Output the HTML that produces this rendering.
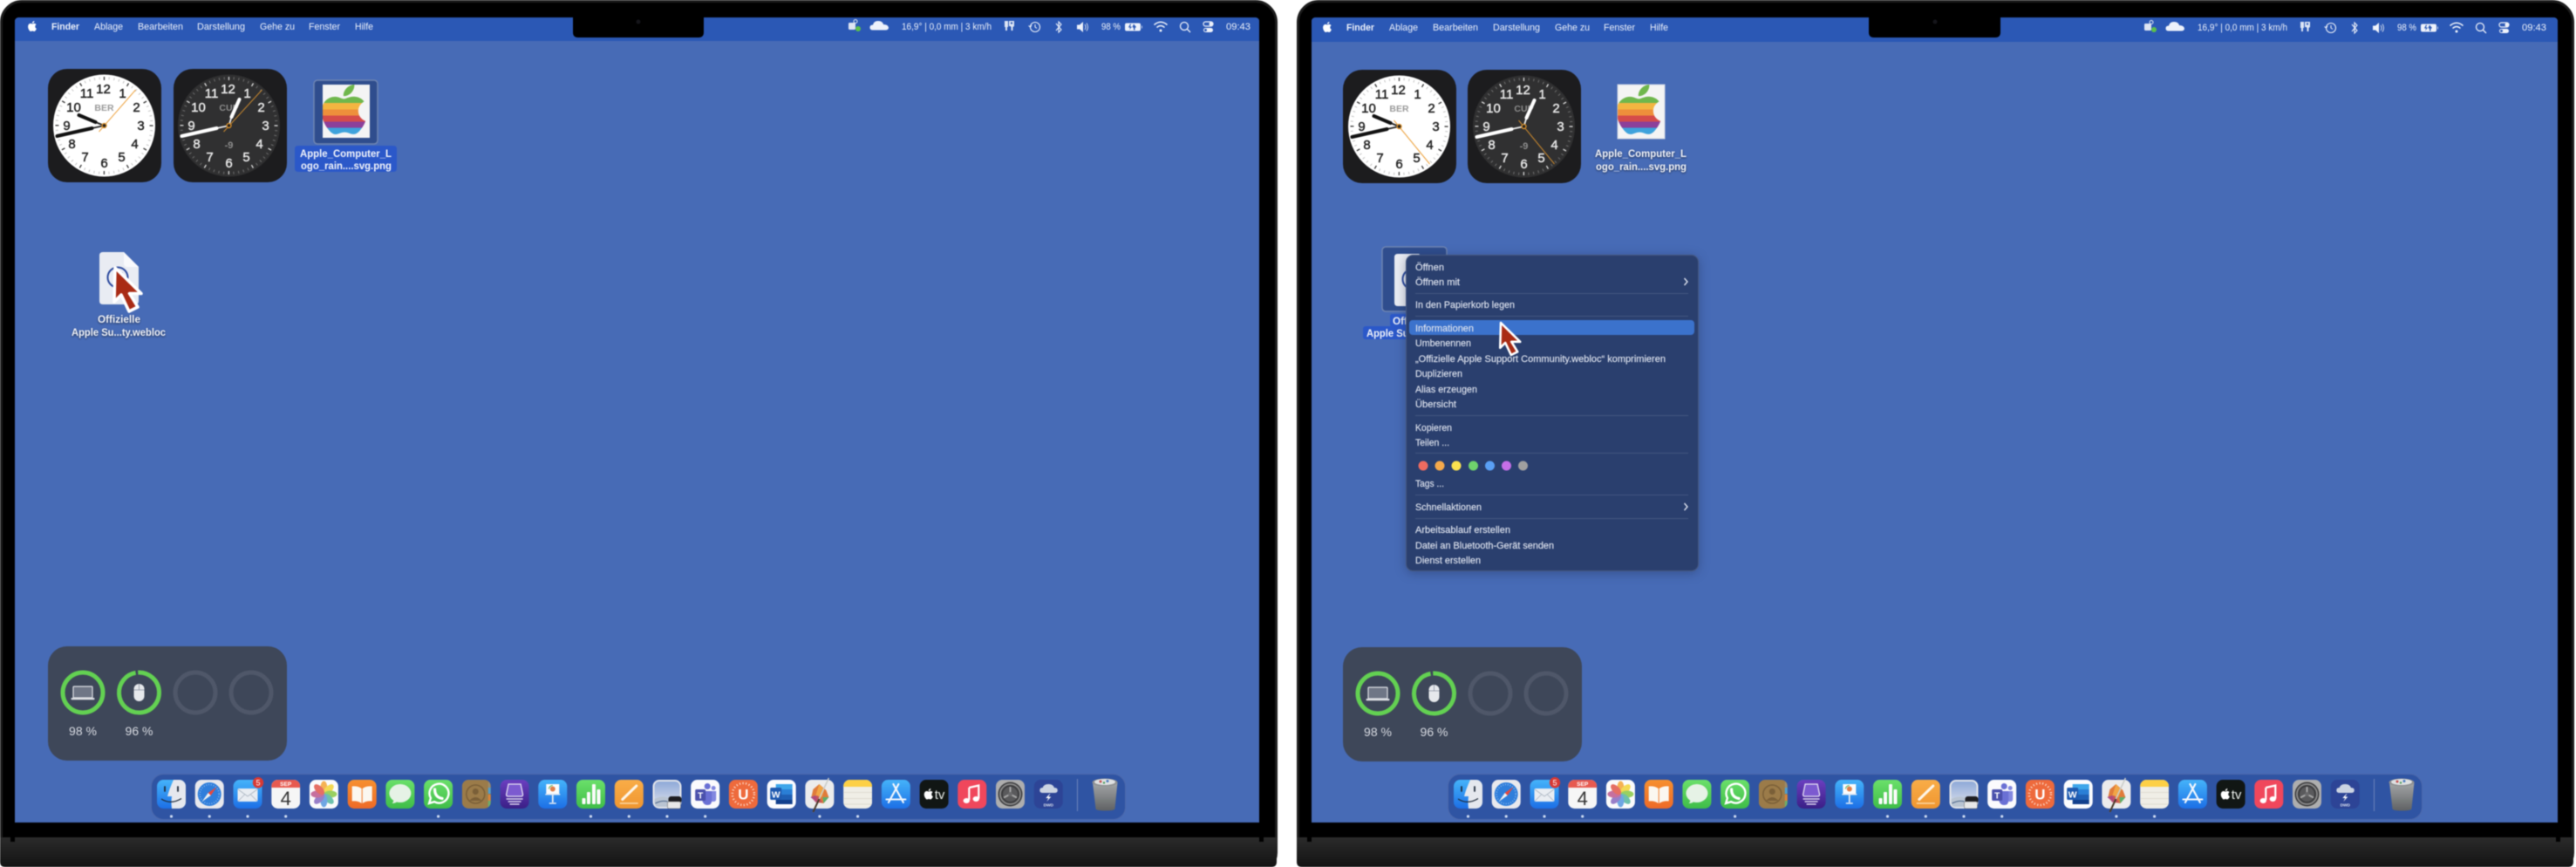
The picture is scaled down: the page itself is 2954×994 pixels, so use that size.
<!DOCTYPE html>
<html><head><meta charset="utf-8"><title>Finder</title>
<style>
html,body{margin:0;padding:0;background:#fff;width:2954px;height:994px;overflow:hidden}
svg{display:block;filter:blur(.6px)}
text{font-family:"Liberation Sans",sans-serif}
.mb{font-size:11px;fill:#eef2fb}
.lb{font-size:11.5px;font-weight:bold;fill:#f2f4fa}
.sh{filter:drop-shadow(0 1px 1px rgba(0,0,0,.55))}
.mi{font-size:11.2px;fill:#dde2ee;stroke:#dde2ee;stroke-width:.15}
.n{font-size:15px;text-anchor:middle;stroke-width:.45}
.w{font-size:14px;fill:#d8dbe2;text-anchor:middle}
</style></head><body>
<svg xmlns="http://www.w3.org/2000/svg" width="2954" height="994" viewBox="0 0 2954 994">
<defs>
<linearGradient id="base" x1="0" y1="0" x2="0" y2="1"><stop offset="0" stop-color="#2b2b2b"/><stop offset="1" stop-color="#131313"/></linearGradient>
<linearGradient id="gb" x1="0" y1="0" x2="0" y2="1"><stop offset="0" stop-color="#45b4fa"/><stop offset="1" stop-color="#1c6fe6"/></linearGradient>
<linearGradient id="gg" x1="0" y1="0" x2="0" y2="1"><stop offset="0" stop-color="#6be06a"/><stop offset="1" stop-color="#3fbd48"/></linearGradient>
<linearGradient id="go" x1="0" y1="0" x2="0" y2="1"><stop offset="0" stop-color="#f9ad48"/><stop offset="1" stop-color="#f09630"/></linearGradient>
<linearGradient id="gor" x1="0" y1="0" x2="0" y2="1"><stop offset="0" stop-color="#f7902f"/><stop offset="1" stop-color="#ee6a28"/></linearGradient>
<linearGradient id="gp" x1="0" y1="0" x2="0" y2="1"><stop offset="0" stop-color="#6b3fc0"/><stop offset="1" stop-color="#3a1f86"/></linearGradient>
<linearGradient id="gt" x1="0" y1="0" x2="0" y2="1"><stop offset="0" stop-color="#a5a7a8"/><stop offset="1" stop-color="#5f6264"/></linearGradient>
<linearGradient id="gsky" x1="0" y1="0" x2="0" y2="1"><stop offset="0" stop-color="#8fa9d8"/><stop offset="1" stop-color="#dfe5ee"/></linearGradient>
<path id="ap" d="M12.152 6.896c-.948 0-2.415-1.078-3.96-1.04-2.04.027-3.91 1.183-4.961 3.014-2.117 3.675-.546 9.103 1.519 12.09 1.013 1.454 2.208 3.09 3.792 3.039 1.52-.065 2.09-.987 3.935-.987 1.831 0 2.35.987 3.96.948 1.637-.026 2.676-1.48 3.676-2.948 1.156-1.688 1.636-3.325 1.662-3.415-.039-.013-3.182-1.221-3.22-4.857-.026-3.04 2.48-4.494 2.597-4.559-1.429-2.09-3.623-2.324-4.39-2.376-2-.156-3.675 1.09-4.61 1.09zM15.53 3.83c.843-1.012 1.4-2.427 1.245-3.83-1.207.052-2.662.805-3.532 1.818-.78.896-1.454 2.338-1.273 3.714 1.338.104 2.715-.688 3.559-1.701"/>
<clipPath id="apc"><use href="#ap" transform="translate(-7 0) scale(2.58 2.375)"/></clipPath>
<clipPath id="r"><rect width="33" height="33" rx="7.5"/></clipPath>

<g id="rainbow"><g clip-path="url(#apc)">
<rect x="0" y="0" width="54" height="21" fill="#6fb74c"/><rect y="21" width="54" height="7.5" fill="#f3b541"/><rect y="28.5" width="54" height="7" fill="#ee8f3b"/><rect y="35.5" width="54" height="7" fill="#d54b4a"/><rect y="42.5" width="54" height="7" fill="#8c409a"/><rect y="49.5" width="54" height="8" fill="#3ea2dc"/>
</g></g>

<g id="ticksL"><circle r="54.5" fill="none" stroke="#c4c4c4" stroke-width="3" stroke-dasharray="1 4.707" transform="rotate(-90.5)"/><circle r="54" fill="none" stroke="#333" stroke-width="4" stroke-dasharray="1.3 26.97" transform="rotate(-90.7)"/></g>
<g id="ticksD"><circle r="54.5" fill="none" stroke="#6e6e6e" stroke-width="3" stroke-dasharray="1 4.707" transform="rotate(-90.5)"/><circle r="54" fill="none" stroke="#ddd" stroke-width="4" stroke-dasharray="1.3 26.97" transform="rotate(-90.7)"/></g>

<g id="lnums" fill="#222" stroke="#222">
<text class="n" x="-1" y="-37">12</text><text class="n" x="21" y="-32">1</text><text class="n" x="37" y="-16">2</text><text class="n" x="42" y="5">3</text><text class="n" x="35" y="26">4</text><text class="n" x="20" y="41">5</text><text class="n" x="0" y="48">6</text><text class="n" x="-22" y="41">7</text><text class="n" x="-37" y="26">8</text><text class="n" x="-43" y="5">9</text><text class="n" x="-35" y="-16">10</text><text class="n" x="-20" y="-32">11</text>
<text x="0" y="-17" text-anchor="middle" font-size="10.5" font-weight="bold" fill="#9a9a9a" stroke="none">BER</text>
</g>
<g id="dnums" fill="#e8e8e8" stroke="#e8e8e8">
<text class="n" x="-1" y="-37">12</text><text class="n" x="21" y="-32">1</text><text class="n" x="37" y="-16">2</text><text class="n" x="42" y="5">3</text><text class="n" x="35" y="26">4</text><text class="n" x="20" y="41">5</text><text class="n" x="0" y="48">6</text><text class="n" x="-22" y="41">7</text><text class="n" x="-37" y="26">8</text><text class="n" x="-43" y="5">9</text><text class="n" x="-35" y="-16">10</text><text class="n" x="-20" y="-32">11</text>
<text x="0" y="-17" text-anchor="middle" font-size="10.5" font-weight="bold" fill="#8d8d8d" stroke="none">CUP</text>
<text x="0" y="26" text-anchor="middle" font-size="11" font-weight="bold" fill="#8d8d8d" stroke="none">-9</text>
</g>

<g id="menuicons" fill="#eef2fb" stroke="none">
<!-- teams -->
<rect x="973" y="26" width="8" height="8" rx="1.2" fill="#dfe5f2"/><circle cx="981" cy="24.5" r="2" fill="none" stroke="#dfe5f2" stroke-width="1"/><circle cx="984" cy="33" r="3" fill="#5cc04a"/>
<!-- cloud -->
<path d="M1001 35q-3.500 0-3.500-3t3.500-3q1-4.500 6-4.500t6 4q5 0 6 3.500q0 3-4 3z" transform="translate(0 -.5)"/>
<!-- keys -->
<path d="M1152 24h4v7h-1v4h-2v-4h-1zM1157 24h6v6l-1.500 1v4h-2v-4l-1-1-1.500 0z" opacity=".92"/><circle cx="1160" cy="26.500" r="1.200" fill="#2b58b5"/>
<!-- time machine -->
<g fill="none" stroke="#eef2fb" stroke-width="1.100"><circle cx="1187" cy="31" r="5.500"/><path d="M1187 28v3l2 1.500M1179.500 29.500l2 1.500 1.500-2" stroke-width="1"/></g>
<!-- bt -->
<path d="M1211 27l6 7-3 3v-12l3 3-6 7" fill="none" stroke="#eef2fb" stroke-width="1.100"/>
<!-- sound -->
<path d="M1235 28.500h3l4-3.500v12l-4-3.500h-3z"/><path d="M1244 28q2 3 0 6M1246 26.500q3 4.500 0 9" fill="none" stroke="#dfe5f2" stroke-width=".9"/>
<!-- battery -->
<rect x="1290" y="26.500" width="18" height="9" rx="2" fill="#eef2fb"/><path d="M1296 27.500l-2 4h2l-1 3 3-4h-2l1-3z" fill="#2b58b5"/><path d="M1300 27.500l3 3.500-1.500 1v2.500h-1.500v-2.500l-1.500-1z" fill="#2b58b5"/><rect x="1309" y="29.500" width="1" height="3" opacity=".7"/>
<!-- wifi -->
<g fill="none" stroke="#eef2fb" stroke-width="1.500"><path d="M1323.500 28.500q7.500-6.500 15 0"/><path d="M1326.500 31.500q4.500-4 9 0"/></g><circle cx="1331" cy="35" r="1.500"/>
<!-- search -->
<g fill="none" stroke="#eef2fb" stroke-width="1.300"><circle cx="1358" cy="30" r="4.500"/><path d="M1361.500 33.500l3.500 3.500"/></g>
<!-- control center -->
<rect x="1380" y="25" width="11" height="5" rx="2.500" fill="none" stroke="#eef2fb" stroke-width="1.200"/><circle cx="1388.500" cy="27.500" r="2"/><rect x="1380" y="32" width="11" height="5" rx="2.500"/><circle cx="1382.500" cy="34.500" r="1.500" fill="#2b58b5"/>
</g>

<g id="dockicons">
<!-- finder -->
<g clip-path="url(#r)"><rect width="33" height="33" fill="url(#gb)"/><path d="M19 0q-5 11-7 19h5q-1 7 0 14h16V0z" fill="#e5e8ee"/><path d="M9 8v5M24 8v5" stroke="#1d2a3a" stroke-width="1.800" stroke-linecap="round"/><path d="M5 22q11 7 23-.5" fill="none" stroke="#1d2a3a" stroke-width="1.300"/></g>
<!-- safari -->
<g transform="translate(43.7 0)"><rect width="33" height="33" rx="7.5" fill="#e9e9ed"/><circle cx="16.500" cy="16.500" r="13.500" fill="#2f7edb"/><circle cx="16.500" cy="16.500" r="11" fill="none" stroke="#9cc3f0" stroke-width="1.500" stroke-dasharray=".8 2"/><path d="M25 8l-10 7 3 3z" fill="#e8483c"/><path d="M8 25l7-10 3 3z" fill="#f2f2f2"/></g>
<!-- mail -->
<g transform="translate(87.5 0)"><rect width="33" height="33" rx="7.5" fill="url(#gb)"/><rect x="5" y="10" width="23" height="15" rx="1.500" fill="#e9edf2"/><path d="M5.500 11l11 8 11-8M5.500 24.500l8-8M27.500 24.500l-8-8" fill="none" stroke="#aab4c0" stroke-width=".8"/><circle cx="28.500" cy="3.200" r="6.200" fill="#d83a34"/><text x="28.500" y="6.500" text-anchor="middle" font-size="9" fill="#fff">5</text></g>
<!-- calendar -->
<g transform="translate(131.200 0)"><g clip-path="url(#r)"><rect width="33" height="33" fill="#f6f6f6"/><rect width="33" height="9" fill="#e75a50"/></g><text x="16.500" y="7" text-anchor="middle" font-size="6.500" font-weight="bold" fill="#fff">SEP</text><text x="16.500" y="29" text-anchor="middle" font-size="22" fill="#333">4</text></g>
<!-- photos -->
<g transform="translate(174.900 0)"><rect width="33" height="33" rx="7.500" fill="#fbfbfb"/><g transform="translate(16.500 16.500)" opacity=".88"><ellipse cy="-7.500" rx="4" ry="7.500" fill="#f5a93c"/><ellipse cy="-7.500" rx="4" ry="7.500" fill="#f2d53c" transform="rotate(45)"/><ellipse cy="-7.500" rx="4" ry="7.500" fill="#8ccb4c" transform="rotate(90)"/><ellipse cy="-7.500" rx="4" ry="7.500" fill="#5ab8a2" transform="rotate(135)"/><ellipse cy="-7.500" rx="4" ry="7.500" fill="#5c9be0" transform="rotate(180)"/><ellipse cy="-7.500" rx="4" ry="7.500" fill="#8b6fc2" transform="rotate(225)"/><ellipse cy="-7.500" rx="4" ry="7.500" fill="#bf5d92" transform="rotate(270)"/><ellipse cy="-7.500" rx="4" ry="7.500" fill="#e25c50" transform="rotate(315)"/></g></g>
<!-- books -->
<g transform="translate(218.700 0)"><rect width="33" height="33" rx="7.500" fill="url(#gor)"/><path d="M16 10q-4-3-11-2.500v17q7-.5 11 2.500zM17 10q4-3 11-2.500v17q-7-.5-11 2.500z" fill="#fbf7f0"/></g>
<!-- messages -->
<g transform="translate(262.400 0)"><rect width="33" height="33" rx="7.500" fill="url(#gg)"/><ellipse cx="16.500" cy="15.500" rx="12.500" ry="10.500" fill="#e6f2e6"/><path d="M9 22q0 4-2 5 5 0 7-3z" fill="#e6f2e6"/></g>
<!-- whatsapp -->
<g transform="translate(306.100 0)"><rect width="33" height="33" rx="7.500" fill="url(#gg)"/><path d="M6 27l1.800-6a11 11 0 1 1 4.200 4.200z" fill="none" stroke="#fff" stroke-width="2.400"/><path d="M12.500 11q0 9 8.500 10.500" fill="none" stroke="#fff" stroke-width="3.200" stroke-linecap="round"/></g>
<!-- contacts -->
<g transform="translate(349.800 0)"><g clip-path="url(#r)"><rect width="33" height="33" fill="#9b7b49"/><rect x="30" y="2" width="3" height="7" fill="#9b8a6c"/><rect x="30" y="9" width="3" height="7" fill="#4f9fd0"/><rect x="30" y="17" width="3" height="7" fill="#d9853a"/><rect x="30" y="24" width="3" height="7" fill="#6cae6c"/></g><circle cx="15.500" cy="16.500" r="10.500" fill="none" stroke="#7a5f38" stroke-width="1.500"/><circle cx="15.500" cy="13.500" r="3.500" fill="#7a5f38"/><path d="M8.500 24q7-8 14 0" fill="#7a5f38"/></g>
<!-- purple -->
<g transform="translate(393.600 0)"><rect width="33" height="33" rx="7.500" fill="url(#gp)"/><path d="M9.500 5h14l2.500 12q0 2-2 2h-15q-2 0-2-2z" fill="#7c5ad0" stroke="#e6e2f4" stroke-width="1.300"/><path d="M7 22h19M9 25h15M11 28h11" stroke="#dcd6f0" stroke-width="1.400"/></g>
<!-- keynote -->
<g transform="translate(437.300 0)"><rect width="33" height="33" rx="7.500" fill="url(#gb)"/><rect x="9" y="5" width="15" height="11" fill="#fbfbfb"/><circle cx="16.500" cy="10.500" r="3" fill="#e0804a"/><path d="M12 10.500a4.500 4.500 0 0 1 4.500-4" stroke="#5ab25a" fill="none"/><path d="M16.500 16v10" stroke="#e8edf5" stroke-width="1.800"/><path d="M12.500 27h8" stroke="#e8edf5" stroke-width="1.500"/><rect x="8" y="16" width="17" height="1.500" fill="#dbe4f2"/></g>
<!-- numbers -->
<g transform="translate(481 0)"><rect width="33" height="33" rx="7.500" fill="url(#gg)"/><g fill="#fbfbfb"><rect x="6.500" y="21" width="4" height="7" rx="1"/><rect x="12" y="14" width="4" height="14" rx="1"/><rect x="18" y="5" width="4" height="23" rx="1"/><rect x="23.500" y="11" width="4" height="17" rx="1"/></g></g>
<!-- pages -->
<g transform="translate(524.800 0)"><rect width="33" height="33" rx="7.500" fill="url(#go)"/><path d="M9 22.500L25 7" stroke="#fdf6ea" stroke-width="3" stroke-linecap="round"/><path d="M6 27h21" stroke="#fbd9a6" stroke-width="1.500"/></g>
<!-- preview -->
<g transform="translate(568.500 0)"><rect width="33" height="33" rx="7.500" fill="#e4e6ea"/><rect x="2" y="2" width="29" height="29" rx="5.500" fill="url(#gsky)"/><path d="M2 22q8-4 14-2t15 0v6q0 5-5 5H7q-5 0-5-5z" fill="#b9c4d2"/><path d="M3 27q8-4 14-2" stroke="#4a6488" fill="none"/><rect x="18" y="19" width="15" height="8" rx="3" fill="#1d1d20"/><rect x="17" y="25" width="15" height="8" rx="1.500" fill="#e8e8e8" stroke="#666" stroke-width=".5"/></g>
<!-- teams -->
<g transform="translate(612.200 0)"><rect width="33" height="33" rx="7.500" fill="#fbfbfd"/><circle cx="19" cy="7.500" r="3.500" fill="#6a70d4"/><circle cx="26" cy="9.500" r="2.500" fill="#8288e0"/><path d="M21 13h8v9q0 3-3 3h-2z" fill="#8288e0"/><path d="M13 13h11v11q0 5-5 5t-6-6z" fill="#6a70d4"/><rect x="5" y="11" width="12" height="13" rx="1.500" fill="#4a50ac"/><text x="11" y="21.500" text-anchor="middle" font-size="10" font-weight="bold" fill="#fff">T</text></g>
<!-- U -->
<g transform="translate(655.900 0)"><rect width="33" height="33" rx="7.500" fill="#ee6a3c"/><circle cx="16.500" cy="16.500" r="12.500" fill="none" stroke="#fbd6c4" stroke-width="2.500" stroke-dasharray="1.200 2.400"/><text x="16.500" y="22.500" text-anchor="middle" font-size="17" font-weight="bold" fill="#fff">U</text></g>
<!-- word -->
<g transform="translate(699.700 0)"><rect width="33" height="33" rx="7.500" fill="#fcfcfe"/><g clip-path="url(#r)"><rect x="10" y="5" width="19" height="6" fill="#3fa6ea"/><rect x="10" y="11" width="19" height="6" fill="#2a7fd6"/><rect x="10" y="17" width="19" height="6" fill="#1f5fb4"/><rect x="10" y="23" width="19" height="5" fill="#123f8c"/></g><rect x="3.500" y="9" width="13" height="14" rx="1.500" fill="#1f5ab0"/><text x="10" y="20.500" text-anchor="middle" font-size="10.500" font-weight="bold" fill="#fff">W</text></g>
<!-- pixelmator -->
<g transform="translate(743.400 0)"><rect width="33" height="33" rx="7.500" fill="#ececec"/><path d="M16 5l8 7 3 8-6 7-7-1-7-6 2-9z" fill="#e07b3a"/><path d="M16 5l6 6-3 9-7-2z" fill="#f1a545"/><path d="M6 20l6-2 2 8z" fill="#8a4aa8"/><path d="M20 20l7 0-6 7z" fill="#5cae6c"/><path d="M7 20l5 6 8 0-6-8z" fill="#bd4a6a" opacity=".8"/><path d="M9 37L27-2" stroke="#caccc8" stroke-width="1.500"/><path d="M9 37l7-15" stroke="#4a3a2a" stroke-width="2"/></g>
<!-- notes -->
<g transform="translate(787.100 0)"><g clip-path="url(#r)"><rect width="33" height="33" fill="#f0eee6"/><rect width="33" height="8" fill="#fdd046"/><path d="M0 14.500h33M0 21.500h33M0 28h33" stroke="#d9d6cc" stroke-width=".8"/></g></g>
<!-- appstore -->
<g transform="translate(830.900 0)"><rect width="33" height="33" rx="7.500" fill="url(#gb)"/><path d="M13.500 5l11.500 21M19.500 5L8 26M5.500 22.500h22" stroke="#f5f8fd" stroke-width="2.100" stroke-linecap="round"/></g>
<!-- tv -->
<g transform="translate(874.600 0)"><rect width="33" height="33" rx="7.500" fill="#111614"/><use href="#ap" transform="translate(4 10) scale(.52)" fill="#fff"/><text x="23" y="22" text-anchor="middle" font-size="15" fill="#eef2ee">tv</text></g>
<!-- music -->
<g transform="translate(918.300 0)"><rect width="33" height="33" rx="7.500" fill="#f0475c"/><path d="M13 9l11-2.500v15" fill="none" stroke="#fff" stroke-width="2.200"/><path d="M13 9v14" stroke="#fff" stroke-width="2.200"/><ellipse cx="10" cy="24" rx="3.700" ry="3" fill="#fff"/><ellipse cx="21" cy="22" rx="3.700" ry="3" fill="#fff"/></g>
<!-- sysprefs -->
<g transform="translate(962 0)"><rect width="33" height="33" rx="7.500" fill="#aeaeae"/><circle cx="16.500" cy="16.500" r="14" fill="#3d3d3f"/><circle cx="16.500" cy="16.500" r="11.500" fill="none" stroke="#8c8c8c" stroke-width="1.800"/><circle cx="16.500" cy="16.500" r="8.500" fill="#5a5a5c"/><path d="M16.500 16.500V8M16.500 16.500l7.500 4M16.500 16.500l-7.500 4" stroke="#a8a8a8" stroke-width="2"/><circle cx="16.500" cy="16.500" r="2.500" fill="#6a6a6c"/></g>
<!-- dwd -->
<g transform="translate(1005.800 0)"><rect width="33" height="33" rx="7.500" fill="#2d4496"/><path d="M10 15q-3.500 0-3.500-3t3.500-3q1-4 6.500-4t6.500 4q4 0 4 3t-3.500 3z" fill="#ccd3e2"/><path d="M18 16l-4.500 5h3l-2 4 5-5.500h-3l2-3.500z" fill="#fff"/><text x="16.500" y="30.500" text-anchor="middle" font-size="4.800" font-weight="bold" fill="#dfe4f0">DWD</text></g>
<!-- separator -->
<rect x="1055" y="-1" width="1" height="37" fill="#6c84bb"/>
<!-- trash -->
<g transform="translate(1072 -2)"><path d="M1 5l3.500 30q0 2.500 11 2.500t11-2.500L29.500 5z" fill="url(#gt)"/><ellipse cx="15" cy="5" rx="14.500" ry="4.500" fill="#8e9092"/><ellipse cx="15" cy="4.500" rx="12" ry="3.500" fill="#dfe1e2"/><circle cx="10" cy="4" r="1.500" fill="#c45050"/><circle cx="18" cy="3.500" r="1.500" fill="#4a7ac0"/><circle cx="14" cy="5.500" r="1.200" fill="#4a9a5a"/></g>
<!-- dots -->
<g fill="#cfdcf2"><circle cx="16.500" cy="42" r="1.600"/><circle cx="60.200" cy="42" r="1.600"/><circle cx="104" cy="42" r="1.600"/><circle cx="147.700" cy="42" r="1.600"/><circle cx="322.600" cy="42" r="1.600"/><circle cx="497.500" cy="42" r="1.600"/><circle cx="541.300" cy="42" r="1.600"/><circle cx="585" cy="42" r="1.600"/><circle cx="628.700" cy="42" r="1.600"/><circle cx="759.900" cy="42" r="1.600"/><circle cx="803.600" cy="42" r="1.600"/></g>
</g>

<path id="cur" d="M0 0L-1 39L7 31L16 50L26 45L16.500 29.500L30 29.500Z"/>

<g id="doc"><path d="M0 4q0-4 4-4h24l17 17v39q0 4-4 4H4q-4 0-4-4z" fill="#e9ecf3"/><path d="M28 0v13q0 4 4 4h13z" fill="#f8f9fc"/><circle cx="21" cy="29" r="11.500" fill="none" stroke="#2c4a9e" stroke-width="2"/><path d="M27 23l-8 5 3 4z" fill="#4a63a8"/></g>

<g id="frame">
<rect x="1.500" y="1.500" width="1462" height="1000" rx="24" fill="#000" stroke="#1c1c1c" stroke-width="3"/>
<path d="M0 960H1464V988Q1464 994 1458 994H6Q0 994 0 988Z" fill="url(#base)"/>
<rect x="12" y="943" width="5" height="22" fill="#000"/><rect x="1444" y="943" width="5" height="22" fill="#000"/>
</g>
</defs>

<!-- LEFT LAPTOP -->
<use href="#frame"/>
<path d="M17 25q0-5 5-5H1439q5 0 5 5V943H17Z" fill="#476bb6"/>
<path d="M17 25q0-5 5-5H1439q5 0 5 5V47H17Z" fill="#2b58b5"/>
<path d="M657 18H807V37q0 6-6 6H663q-6 0-6-6Z" fill="#000"/><circle cx="732" cy="25" r="2.500" fill="#15151a"/>

<use href="#ap" transform="translate(31 24) scale(.5)" fill="#fff"/>
<text class="mb" x="59" y="34" font-weight="bold" fill="#fff" textLength="32" lengthAdjust="spacingAndGlyphs">Finder</text>
<text class="mb" x="108" y="34" textLength="33" lengthAdjust="spacingAndGlyphs">Ablage</text>
<text class="mb" x="158" y="34" textLength="52" lengthAdjust="spacingAndGlyphs">Bearbeiten</text>
<text class="mb" x="226" y="34" textLength="55" lengthAdjust="spacingAndGlyphs">Darstellung</text>
<text class="mb" x="298" y="34" textLength="40" lengthAdjust="spacingAndGlyphs">Gehe zu</text>
<text class="mb" x="354" y="34" textLength="36" lengthAdjust="spacingAndGlyphs">Fenster</text>
<text class="mb" x="407" y="34" textLength="21" lengthAdjust="spacingAndGlyphs">Hilfe</text>
<use href="#menuicons"/>
<text class="mb" x="1034" y="34" textLength="103" lengthAdjust="spacingAndGlyphs">16,9° | 0,0 mm | 3 km/h</text>
<text class="mb" x="1263" y="34" textLength="22" lengthAdjust="spacingAndGlyphs">98 %</text>
<text class="mb" x="1406" y="34" textLength="28" lengthAdjust="spacingAndGlyphs">09:43</text>

<!-- clocks left -->
<rect x="55" y="79" width="130" height="130" rx="22" fill="#1c1c1e"/>
<g transform="translate(119.500 144)"><circle r="58.500" fill="#fff"/><use href="#ticksL"/><use href="#lnums"/>
<path d="M0 0L-10-4" stroke="#222" stroke-width="1.800"/><path d="M-10-4L-29-12" stroke="#111" stroke-width="4" stroke-linecap="round"/>
<path d="M0 0L-14 3" stroke="#222" stroke-width="1.800"/><path d="M-14 3L-54 12" stroke="#111" stroke-width="4" stroke-linecap="round"/>
<path d="M-6 7L36-41" stroke="#eda13c" stroke-width="1"/><circle r="2.500" fill="#222" stroke="#d88f2a" stroke-width="1.300"/></g>
<rect x="199" y="79" width="130" height="130" rx="22" fill="#1c1c1e"/>
<g transform="translate(262.500 144)"><circle r="58.500" fill="#303031"/><use href="#ticksD"/><use href="#dnums"/>
<path d="M0 0L3-10" stroke="#eee" stroke-width="1.800"/><path d="M3-10L12-30" stroke="#fff" stroke-width="4" stroke-linecap="round"/>
<path d="M0 0L-14 3" stroke="#eee" stroke-width="1.800"/><path d="M-14 3L-54 12" stroke="#fff" stroke-width="4" stroke-linecap="round"/>
<path d="M-6 7L38-41" stroke="#c9882e" stroke-width="1"/><circle r="2.500" fill="#222" stroke="#d88f2a" stroke-width="1.300"/></g>

<!-- apple file left -->
<rect x="360" y="92" width="73" height="73" rx="4" fill="#2f4d8d" stroke="#6e84b2" stroke-width="1.500"/>
<rect x="370" y="97" width="54" height="61" fill="#f4f4f4"/>
<g transform="translate(370 97)"><use href="#rainbow"/></g>
<path d="M338 171q0-4 4-4H451q4 0 4 4V193q0 4-4 4H342q-4 0-4-4Z" fill="#2b58c9"/>
<text class="lb" x="344" y="180" textLength="105" lengthAdjust="spacingAndGlyphs" fill="#fff">Apple_Computer_L</text>
<text class="lb" x="345" y="194" textLength="104" lengthAdjust="spacingAndGlyphs" fill="#fff">ogo_rain....svg.png</text>

<!-- webloc left -->
<g transform="translate(114 289)"><use href="#doc"/></g>
<g class="sh"><text class="lb" x="112" y="370" textLength="49" lengthAdjust="spacingAndGlyphs">Offizielle</text>
<text class="lb" x="82" y="385" textLength="108" lengthAdjust="spacingAndGlyphs">Apple Su...ty.webloc</text></g>
<g transform="translate(132 307)"><use href="#cur" fill="#a92b14" stroke="#fff" stroke-width="3.500" stroke-linejoin="round"/></g>

<!-- widget left -->
<rect x="55" y="741" width="274" height="131" rx="22" fill="#3e4759"/>
<g fill="none" stroke-width="5"><circle cx="95" cy="794" r="23" stroke="#63d152"/><circle cx="159.500" cy="794" r="23" stroke="#63d152" stroke-dasharray="141.500 3" transform="rotate(-93 159.500 794)"/><circle cx="224" cy="794" r="23" stroke="#4f5769"/><circle cx="288" cy="794" r="23" stroke="#4f5769"/></g>
<rect x="84" y="787" width="22" height="13" rx="1" fill="#6f7686" stroke="#dfe1e6" stroke-width="1.200"/><rect x="81.500" y="800" width="27" height="2.200" rx="1" fill="#dfe1e6"/>
<rect x="153.500" y="784" width="12" height="20" rx="6" fill="#e6e8ec"/><path d="M159.500 784v7M153.500 791h12" stroke="#8a90a0" stroke-width=".8"/>
<text class="w" x="95" y="843">98 %</text><text class="w" x="159.500" y="843">96 %</text>

<!-- dock left -->
<rect x="173.500" y="887.500" width="1117" height="52" rx="14" fill="#2f54a3" stroke="#4d69ac"/>
<g transform="translate(180 894)"><use href="#dockicons"/></g>

<!-- RIGHT LAPTOP -->
<g transform="translate(1487 0)"><use href="#frame"/></g>
<path d="M1504 25q0-5 5-5H2928q5 0 5 5V943H1504Z" fill="#476bb6"/>
<path d="M1504 25q0-5 5-5H2928q5 0 5 5V48H1504Z" fill="#2b58b5"/>
<path d="M2143 18H2294V37q0 6-6 6H2149q-6 0-6-6Z" fill="#000"/><circle cx="2219" cy="25" r="2.500" fill="#15151a"/>

<use href="#ap" transform="translate(1516 25) scale(.5)" fill="#fff"/>
<text class="mb" x="1544" y="35" font-weight="bold" fill="#fff" textLength="32" lengthAdjust="spacingAndGlyphs">Finder</text>
<text class="mb" x="1593" y="35" textLength="33" lengthAdjust="spacingAndGlyphs">Ablage</text>
<text class="mb" x="1643" y="35" textLength="52" lengthAdjust="spacingAndGlyphs">Bearbeiten</text>
<text class="mb" x="1712" y="35" textLength="54" lengthAdjust="spacingAndGlyphs">Darstellung</text>
<text class="mb" x="1783" y="35" textLength="40" lengthAdjust="spacingAndGlyphs">Gehe zu</text>
<text class="mb" x="1839" y="35" textLength="36" lengthAdjust="spacingAndGlyphs">Fenster</text>
<text class="mb" x="1892" y="35" textLength="21" lengthAdjust="spacingAndGlyphs">Hilfe</text>
<g transform="translate(1486 1)"><use href="#menuicons"/></g>
<text class="mb" x="2520" y="35" textLength="103" lengthAdjust="spacingAndGlyphs">16,9° | 0,0 mm | 3 km/h</text>
<text class="mb" x="2749" y="35" textLength="22" lengthAdjust="spacingAndGlyphs">98 %</text>
<text class="mb" x="2892" y="35" textLength="28" lengthAdjust="spacingAndGlyphs">09:43</text>

<!-- clocks right -->
<rect x="1540" y="80" width="130" height="130" rx="22" fill="#1c1c1e"/>
<g transform="translate(1604.500 145)"><circle r="58.500" fill="#fff"/><use href="#ticksL"/><use href="#lnums"/>
<path d="M0 0L-10-4" stroke="#222" stroke-width="1.800"/><path d="M-10-4L-29-12" stroke="#111" stroke-width="4" stroke-linecap="round"/>
<path d="M0 0L-14 3" stroke="#222" stroke-width="1.800"/><path d="M-14 3L-54 12" stroke="#111" stroke-width="4" stroke-linecap="round"/>
<path d="M-6-7L35 43" stroke="#eda13c" stroke-width="1"/><circle r="2.500" fill="#222" stroke="#d88f2a" stroke-width="1.300"/></g>
<rect x="1683" y="80" width="130" height="130" rx="22" fill="#1c1c1e"/>
<g transform="translate(1747.500 145)"><circle r="58.500" fill="#303031"/><use href="#ticksD"/><use href="#dnums"/>
<path d="M0 0L3-10" stroke="#eee" stroke-width="1.800"/><path d="M3-10L12-30" stroke="#fff" stroke-width="4" stroke-linecap="round"/>
<path d="M0 0L-14 3" stroke="#eee" stroke-width="1.800"/><path d="M-14 3L-54 12" stroke="#fff" stroke-width="4" stroke-linecap="round"/>
<path d="M-6-7L35 43" stroke="#c9882e" stroke-width="1"/><circle r="2.500" fill="#222" stroke="#d88f2a" stroke-width="1.300"/></g>

<!-- apple file right -->
<rect x="1855" y="97" width="54" height="62" fill="#f4f4f4" stroke="#c8d0e0"/>
<g transform="translate(1855 97)"><use href="#rainbow"/></g>
<g class="sh"><text class="lb" x="1829" y="180" textLength="105" lengthAdjust="spacingAndGlyphs">Apple_Computer_L</text>
<text class="lb" x="1830" y="195" textLength="104" lengthAdjust="spacingAndGlyphs">ogo_rain....svg.png</text></g>

<!-- webloc right -->
<rect x="1585" y="283" width="74" height="74" rx="4" fill="#2f4d8d" stroke="#6e84b2" stroke-width="1.500"/>
<g transform="translate(1599 291)"><use href="#doc"/></g>
<rect x="1594" y="360" width="55" height="14.500" rx="2.500" fill="#2b58c9"/>
<rect x="1563" y="374" width="116" height="15" rx="3" fill="#2b58c9"/>
<text class="lb" x="1597" y="372" textLength="49" lengthAdjust="spacingAndGlyphs" fill="#fff">Offizielle</text>
<text class="lb" x="1567" y="386" textLength="108" lengthAdjust="spacingAndGlyphs" fill="#fff">Apple Su...ty.webloc</text>

<!-- context menu -->
<rect x="1612.500" y="292.500" width="335" height="362" rx="8" fill="#2a3f6e" stroke="#46587f" style="filter:drop-shadow(0 2px 6px rgba(20,30,60,.35))"/>
<rect x="1616" y="367" width="327" height="17" rx="4" fill="#3b72cc"/>
<g stroke="#42557f" stroke-width="1"><path d="M1623 336.500H1936M1623 362.500H1936M1623 476.500H1936M1623 519.500H1936M1623 567.500H1936M1623 594.500H1936"/></g>
<text class="mi" x="1623" y="310" textLength="33" lengthAdjust="spacingAndGlyphs">Öffnen</text>
<text class="mi" x="1623" y="327" textLength="51" lengthAdjust="spacingAndGlyphs">Öffnen mit</text>
<text class="mi" x="1623" y="353" textLength="114" lengthAdjust="spacingAndGlyphs">In den Papierkorb legen</text>
<text class="mi" x="1623" y="380" textLength="67" lengthAdjust="spacingAndGlyphs" fill="#fff">Informationen</text>
<text class="mi" x="1623" y="397" textLength="64" lengthAdjust="spacingAndGlyphs">Umbenennen</text>
<text class="mi" x="1623" y="415" textLength="287" lengthAdjust="spacingAndGlyphs">„Offizielle Apple Support Community.webloc“ komprimieren</text>
<text class="mi" x="1623" y="432" textLength="54" lengthAdjust="spacingAndGlyphs">Duplizieren</text>
<text class="mi" x="1623" y="450" textLength="71" lengthAdjust="spacingAndGlyphs">Alias erzeugen</text>
<text class="mi" x="1623" y="467" textLength="47" lengthAdjust="spacingAndGlyphs">Übersicht</text>
<text class="mi" x="1623" y="494" textLength="42" lengthAdjust="spacingAndGlyphs">Kopieren</text>
<text class="mi" x="1623" y="511" textLength="39" lengthAdjust="spacingAndGlyphs">Teilen ...</text>
<circle cx="1632" cy="534" r="5.500" fill="#ee6b60"/><circle cx="1651" cy="534" r="5.500" fill="#f5a94b"/><circle cx="1670" cy="534" r="5.500" fill="#fae24f"/><circle cx="1689.500" cy="534" r="5.500" fill="#6fd26c"/><circle cx="1708.500" cy="534" r="5.500" fill="#5aa0f5"/><circle cx="1727.500" cy="534" r="5.500" fill="#c66fe8"/><circle cx="1746.500" cy="534" r="5.500" fill="#a0a0a0"/>
<text class="mi" x="1623" y="558" textLength="33" lengthAdjust="spacingAndGlyphs">Tags ...</text>
<text class="mi" x="1623" y="585" textLength="76" lengthAdjust="spacingAndGlyphs">Schnellaktionen</text>
<text class="mi" x="1623" y="611" textLength="109" lengthAdjust="spacingAndGlyphs">Arbeitsablauf erstellen</text>
<text class="mi" x="1623" y="629" textLength="159" lengthAdjust="spacingAndGlyphs">Datei an Bluetooth-Gerät senden</text>
<text class="mi" x="1623" y="646" textLength="75" lengthAdjust="spacingAndGlyphs">Dienst erstellen</text>
<path d="M1931.500 319l3.500 4-3.500 4M1931.500 577l3.500 4-3.500 4" fill="none" stroke="#dde2ee" stroke-width="1.400"/>
<g transform="translate(1721 370) scale(.74)"><use href="#cur" fill="#a92b14" stroke="#fff" stroke-width="3.500" stroke-linejoin="round"/></g>

<!-- widget right -->
<rect x="1540" y="742" width="274" height="131" rx="22" fill="#3e4759"/>
<g fill="none" stroke-width="5"><circle cx="1580" cy="795" r="23" stroke="#63d152"/><circle cx="1644.500" cy="795" r="23" stroke="#63d152" stroke-dasharray="141.500 3" transform="rotate(-93 1644.500 795)"/><circle cx="1709" cy="795" r="23" stroke="#4f5769"/><circle cx="1773" cy="795" r="23" stroke="#4f5769"/></g>
<rect x="1569" y="788" width="22" height="13" rx="1" fill="#6f7686" stroke="#dfe1e6" stroke-width="1.200"/><rect x="1566.500" y="801" width="27" height="2.200" rx="1" fill="#dfe1e6"/>
<rect x="1638.500" y="785" width="12" height="20" rx="6" fill="#e6e8ec"/><path d="M1644.500 785v7M1638.500 792h12" stroke="#8a90a0" stroke-width=".8"/>
<text class="w" x="1580" y="844">98 %</text><text class="w" x="1644.500" y="844">96 %</text>

<!-- dock right -->
<rect x="1660.500" y="887.500" width="1117" height="52" rx="14" fill="#2f54a3" stroke="#4d69ac"/>
<g transform="translate(1667 894)"><use href="#dockicons"/></g>
</svg>
</body></html>
